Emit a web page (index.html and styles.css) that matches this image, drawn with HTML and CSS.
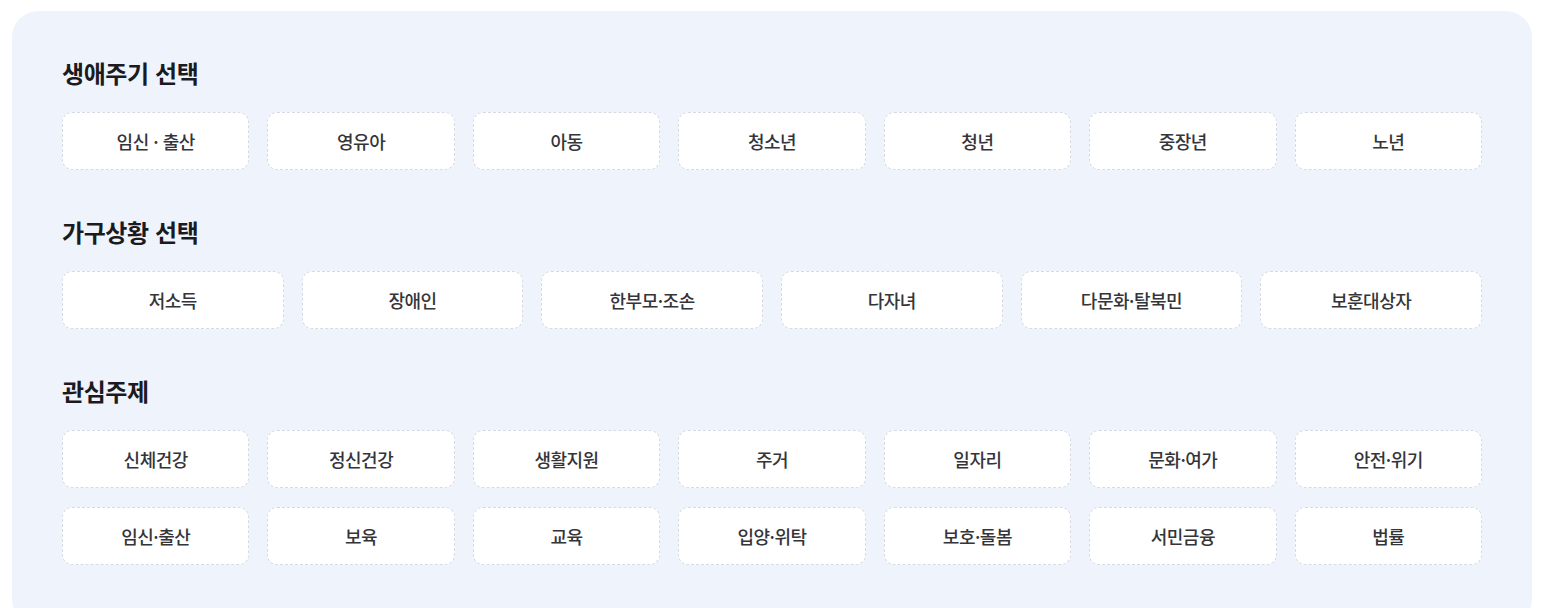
FILE: index.html
```html
<!DOCTYPE html>
<html lang="ko">
<head>
<meta charset="utf-8">
<title>생애주기 선택</title>
<link rel="stylesheet" href="styles.css">
</head>
<body>
<div class="panel">
  <section class="group">
    <h2 class="group-title">생애주기 선택</h2>
    <div class="grid grid-7">
      <button class="chip">임신 · 출산</button>
      <button class="chip">영유아</button>
      <button class="chip">아동</button>
      <button class="chip">청소년</button>
      <button class="chip">청년</button>
      <button class="chip">중장년</button>
      <button class="chip">노년</button>
    </div>
  </section>
  <section class="group">
    <h2 class="group-title">가구상황 선택</h2>
    <div class="grid grid-6">
      <button class="chip">저소득</button>
      <button class="chip">장애인</button>
      <button class="chip">한부모·조손</button>
      <button class="chip">다자녀</button>
      <button class="chip">다문화·탈북민</button>
      <button class="chip">보훈대상자</button>
    </div>
  </section>
  <section class="group">
    <h2 class="group-title">관심주제</h2>
    <div class="grid grid-7">
      <button class="chip">신체건강</button>
      <button class="chip">정신건강</button>
      <button class="chip">생활지원</button>
      <button class="chip">주거</button>
      <button class="chip">일자리</button>
      <button class="chip">문화·여가</button>
      <button class="chip">안전·위기</button>
      <button class="chip">임신·출산</button>
      <button class="chip">보육</button>
      <button class="chip">교육</button>
      <button class="chip">입양·위탁</button>
      <button class="chip">보호·돌봄</button>
      <button class="chip">서민금융</button>
      <button class="chip">법률</button>
    </div>
  </section>
</div>
</body>
</html>
```

FILE: styles.css
```css
html, body {
  margin: 0;
  padding: 0;
  background: #ffffff;
}

body {
  font-family: "Noto Sans CJK KR", "Noto Sans", sans-serif;
  overflow: hidden;
}

.panel {
  margin: 11px 31px 0 12px;
  width: 1520px;
  box-sizing: border-box;
  padding: 45px 50px 60px 50px;
  background: #eff3fc;
  border-radius: 26px;
  display: flex;
  flex-direction: column;
  gap: 45px;
}

.group {
  display: flex;
  flex-direction: column;
  gap: 23px;
}

.group-title {
  margin: 0;
  font-size: 24px;
  line-height: 33px;
  font-weight: 700;
  color: #1b1b1f;
  letter-spacing: -0.4px;
}

.grid {
  display: grid;
  gap: 19px 18px;
}

.grid-7 {
  grid-template-columns: repeat(7, 1fr);
}

.grid-6 {
  grid-template-columns: repeat(6, 1fr);
}

.chip {
  height: 58px;
  margin: 0;
  padding: 0;
  background: #ffffff;
  border: 1px dashed #d6dae3;
  border-radius: 10px;
  font-family: "Noto Sans CJK KR", "Noto Sans", sans-serif;
  font-size: 18px;
  font-weight: 500;
  color: #353539;
  letter-spacing: -0.5px;
  cursor: pointer;
}
```
